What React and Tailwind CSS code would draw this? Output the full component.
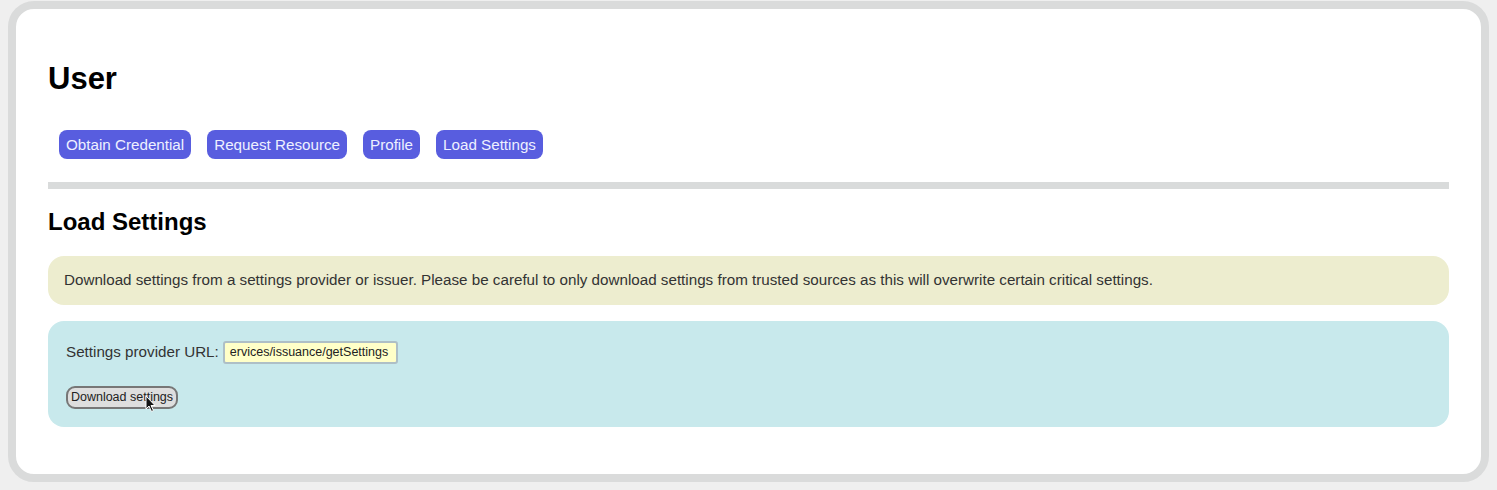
import React from 'react';

const tabs = ['Obtain Credential', 'Request Resource', 'Profile', 'Load Settings'];

function Cursor() {
  return (
    <svg
      className="absolute left-[145px] top-[395px] pointer-events-none"
      width="12"
      height="18"
      viewBox="0 0 12 18"
    >
      <path d="M1 1 L1 14 L4 11 L6.5 16.5 L8.5 15.5 L6 10.5 L10 10.5 Z" fill="#111" stroke="#fff" strokeWidth="1" />
    </svg>
  );
}

export default function App() {
  return (
    <div className="relative w-[1497px] h-[490px] bg-[#efefef] pt-px px-2 pb-2 font-['Liberation_Sans',Arial,sans-serif] text-[#333]">
      <div className="w-[1481px] h-[481px] border-8 border-[#dadbdb] rounded-[26px] bg-white px-8 pt-[51px]">
        <h1 className="text-[31px] leading-[37px] font-bold text-black">User</h1>

        {/* tabs */}
        <div className="mt-[33px] flex gap-4 pl-[11px]">
          {tabs.map((t) => (
            <button
              key={t}
              className="h-[29px] px-[7px] rounded-[8px] bg-[#585ddf] text-[#eef0ff] text-[15.2px] leading-[29px]"
            >
              {t}
            </button>
          ))}
        </div>

        <div className="mt-[23px] h-[7px] bg-[#d9dbdb]" />

        <h2 className="mt-[19px] text-[24px] leading-[28px] font-bold text-black">Load Settings</h2>

        {/* warning */}
        <div className="mt-[20px] h-[49px] rounded-[16px] bg-[#ededcf] px-4 flex items-center text-[15.2px]">
          Download settings from a settings provider or issuer. Please be careful to only download settings from trusted sources as this will overwrite certain critical settings.
        </div>

        {/* form */}
        <div className="mt-4 h-[106px] rounded-[16px] bg-[#c8e9ec] pl-[18px] pt-5">
          <div className="flex items-center text-[15.2px]">
            <span>Settings provider URL:</span>
            <div className="ml-[4px] w-[175px] h-[23px] border-2 border-[#aebfc6] bg-[#ffffc8] rounded-[3px] pl-[5px] flex items-center text-[12.5px] text-[#222] overflow-hidden whitespace-nowrap">
              ervices/issuance/getSettings
            </div>
          </div>
          <button className="mt-[22px] h-[23px] w-[112px] rounded-[9px] border-2 border-[#777] bg-[#dedede] text-[12.5px] text-[#222] leading-[19px] whitespace-nowrap">
            Download settings
          </button>
        </div>
      </div>
      <Cursor />
    </div>
  );
}
